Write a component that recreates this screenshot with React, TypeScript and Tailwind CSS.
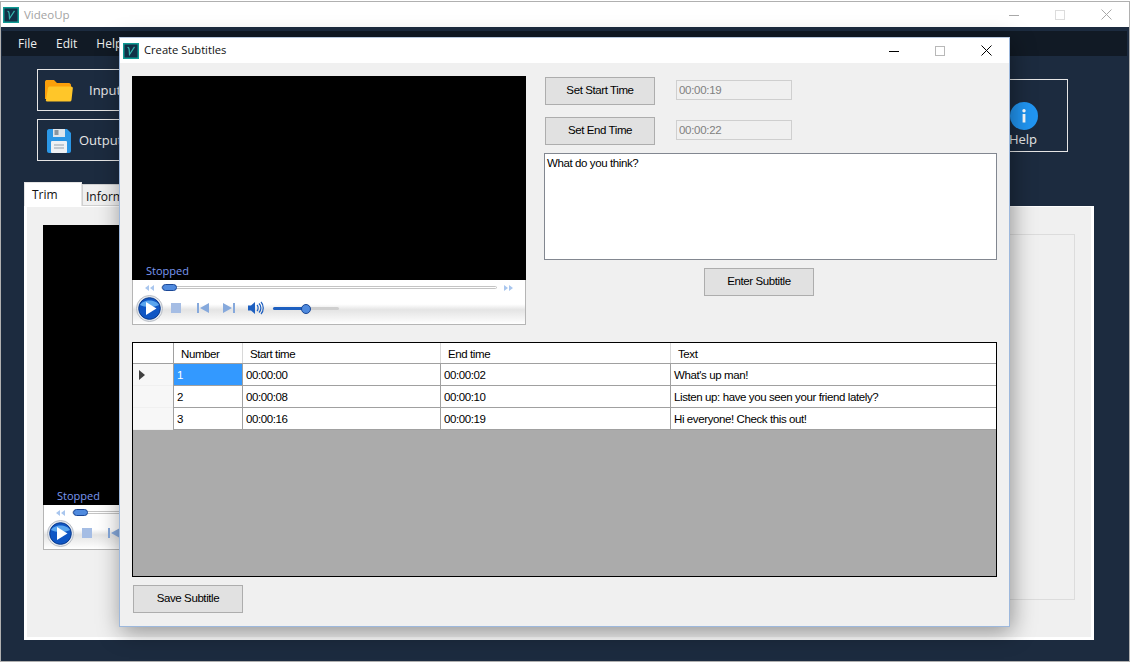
const ui = { fontFamily: '"Liberation Sans", Arial, sans-serif' };
const segoe = { fontFamily: '"Open Sans", "Noto Sans", sans-serif' };

const Logo = () => (
  <svg width="16" height="16" viewBox="0 0 16 16" className="shrink-0">
    <rect width="16" height="16" fill="#0f9a94" />
    <rect x="1.5" y="1.5" width="13" height="13" fill="#123047" />
    <path d="M4.5 4.5 C5.5 4 6 5 6.2 7 L6.5 11.5 L11.5 3.8" fill="none" stroke="#35b5ad" strokeWidth="1.2" />
  </svg>
);

const WinButtons = ({ dim }: { dim?: boolean }) => {
  const c = dim ? "#a8a8a8" : "#000000";
  return (
    <div className="flex items-center">
      <svg width="10" height="10" viewBox="0 0 10 10" className="mr-[36px]">
        <path d="M0 5.5H10" stroke={c} strokeWidth="1" />
      </svg>
      <svg width="10" height="10" viewBox="0 0 10 10" className="mr-[36px]">
        <rect x="0.5" y="0.5" width="9" height="9" fill="none" stroke={dim ? "#dcdcdc" : "#b8b8b8"} />
      </svg>
      <svg width="11" height="11" viewBox="0 0 11 11">
        <path d="M0.5 0.5L10.5 10.5M10.5 0.5L0.5 10.5" stroke={c} strokeWidth="1" />
      </svg>
    </div>
  );
};

const Player = ({ width, height }: { width: number; height: number }) => (
  <div className="flex flex-col shrink-0" style={{ width }}>
    <div className="bg-black flex items-end pl-[14px] pb-[2px]" style={{ height }}>
      <span className="text-[11px] leading-[14px] text-[#7a98f2]" style={segoe}>Stopped</span>
    </div>
    <div className="h-[45px] border border-t-0 border-[#b5b5b5] bg-[linear-gradient(#ffffff_0%,#ffffff_55%,#e4e4e4_68%,#f6f6f6_90%,#ffffff_100%)]">
      <div className="flex items-center h-[13px] mt-[1px] pl-[11px]">
        <svg width="10" height="6" viewBox="0 0 10 6"><path d="M5 0V6L1 3ZM10 0V6L6 3Z" fill="#a9c6ee" /></svg>
        <div className="relative ml-[7px] h-[3px] border border-[#c4c4c4] bg-white rounded-full" style={{ width: 336 }}>
          <div className="absolute left-0 top-[-3px] w-[15px] h-[7px] rounded-full bg-[#4f8ade] border border-[#1a4796]" />
        </div>
        <svg width="10" height="6" viewBox="0 0 10 6" className="ml-[7px]"><path d="M0 0V6L4 3ZM5 0V6L9 3Z" fill="#a9c6ee" /></svg>
      </div>
      <div className="flex items-center h-[28px] pl-[3px]">
        <svg width="27" height="27" viewBox="0 0 27 27">
          <circle cx="13.5" cy="13.5" r="13" fill="#e4e8ee" stroke="#b9bdc4" />
          <circle cx="13.5" cy="13.5" r="10.8" fill="#0f56c4" stroke="#0a3a8c" />
          <path d="M4 10 C7 4 20 4 23 10 C19 12.5 8 12.5 4 10Z" fill="#5aa6ee" />
          <path d="M10 7L20.5 13.5L10 20Z" fill="#ffffff" />
        </svg>
        <div className="ml-[8px] w-[10px] h-[10px] bg-[#a5bde4]" />
        <svg width="12" height="10" viewBox="0 0 12 10" className="ml-[16px]"><path d="M0 0H2V10H0ZM12 0V10L3 5Z" fill="#86a9dc" /></svg>
        <svg width="12" height="10" viewBox="0 0 12 10" className="ml-[14px]"><path d="M0 0V10L9 5ZM10 0H12V10H10Z" fill="#86a9dc" /></svg>
        <svg width="16" height="14" viewBox="0 0 16 14" className="ml-[13px]">
          <path d="M0 4.5H3L7 1V13L3 9.5H0Z" fill="#1d5fc0" />
          <path d="M9 4C10.5 5.5 10.5 8.5 9 10M11 2.5C13.5 5 13.5 9 11 11.5M13 1C16 4 16 10 13 13" fill="none" stroke="#1d5fc0" strokeWidth="1.2" />
        </svg>
        <div className="relative ml-[9px] w-[66px] h-[3px] bg-[#cfcfcf] rounded-full">
          <div className="w-[33px] h-[3px] bg-[#1d5fc0] rounded-full" />
          <div className="absolute left-[28px] top-[-3px] w-[10px] h-[10px] rounded-full bg-[#4f8ade] border border-[#1a4796]" />
        </div>
      </div>
    </div>
  </div>
);

const WinBtn = ({ label, className }: { label: string; className?: string }) => (
  <button className={"w-[110px] h-[28px] bg-[#e1e1e1] border border-[#adadad] text-[11.5px] text-black tracking-[-0.4px] " + (className ?? "")} style={ui}>
    {label}
  </button>
);

const rows = [
  ["1", "00:00:00", "00:00:02", "What's up man!"],
  ["2", "00:00:08", "00:00:10", "Listen up: have you seen your friend lately?"],
  ["3", "00:00:16", "00:00:19", "Hi everyone! Check this out!"],
];

const columns = "grid grid-cols-[40px_69px_198px_230px_1fr]";

const SubtitleGrid = () => (
  <div className="mt-[17px] h-[235px] border border-black bg-[#ababab] text-[11.5px] tracking-[-0.4px] text-black" style={ui}>
    <div className={columns + " h-[21px] bg-white border-b border-[#a0a0a0]"}>
      <div />
      <div className="border-l border-[#a0a0a0] pl-[7px] pt-[2px] leading-[18px]">Number</div>
      <div className="border-l border-[#d8d8d8] pl-[7px] pt-[2px] leading-[18px]">Start time</div>
      <div className="border-l border-[#d8d8d8] pl-[7px] pt-[2px] leading-[18px]">End time</div>
      <div className="border-l border-[#d8d8d8] pl-[7px] pt-[2px] leading-[18px]">Text</div>
    </div>
    {rows.map((row, i) => (
      <div key={row[0]} className={columns + " h-[22px] leading-[19px]"}>
        <div className="bg-[#f7f7f7] flex items-center pl-[6px] border-b border-[#f0f0f0]">
          {i === 0 && <div className="w-0 h-0 border-y-[5px] border-y-transparent border-l-[6px] border-l-[#404040]" />}
        </div>
        <div className={"border-l border-b border-[#a0a0a0] pl-[3px] pt-[2px] " + (i === 0 ? "bg-[#3399ff] text-white" : "bg-white")}>{row[0]}</div>
        <div className="bg-white border-l border-b border-[#a0a0a0] pl-[3px] pt-[2px]">{row[1]}</div>
        <div className="bg-white border-l border-b border-[#a0a0a0] pl-[3px] pt-[2px]">{row[2]}</div>
        <div className="bg-white border-l border-b border-[#a0a0a0] pl-[3px] pt-[2px]">{row[3]}</div>
      </div>
    ))}
  </div>
);

const CreateSubtitles = () => (
  <div className="absolute left-[119px] top-[37px] w-[891px] h-[590px] bg-[#f0f0f0] border border-[#9db8dc] border-t-[#b8c8de] shadow-[2px_5px_22px_rgba(0,0,0,0.4)]">
    <div className="h-[25px] bg-white flex items-center pl-[3px] pr-[17px]">
      <Logo />
      <span className="ml-[5px] text-[11.2px] text-[#111]" style={segoe}>Create Subtitles</span>
      <div className="ml-auto"><WinButtons /></div>
    </div>
    <div className="pl-[12px] pr-[12px]">
      <div className="flex pt-[13px]">
        <Player width={394} height={204} />
        <div className="ml-[18px] flex-1 flex flex-col">
          <div className="flex items-start pl-[1px] mt-[1px]">
            <WinBtn label="Set Start Time" />
            <input readOnly value="00:00:19" className="ml-[21px] mt-[3px] w-[116px] h-[20px] bg-[#f0f0f0] border border-[#cfcfcf] px-[2px] text-[11.5px] tracking-[-0.3px] text-[#808080]" style={ui} />
          </div>
          <div className="flex items-start pl-[1px] mt-[12px]">
            <WinBtn label="Set End Time" />
            <input readOnly value="00:00:22" className="ml-[21px] mt-[3px] w-[116px] h-[20px] bg-[#f0f0f0] border border-[#cfcfcf] px-[2px] text-[11.5px] tracking-[-0.3px] text-[#808080]" style={ui} />
          </div>
          <textarea readOnly value="What do you think?" className="mt-[8px] w-[453px] h-[107px] bg-white border border-[#828790] px-[2px] py-[1px] text-[11.5px] tracking-[-0.4px] text-black resize-none outline-none" style={ui} />
          <div className="flex mt-[8px] pl-[160px]">
            <WinBtn label="Enter Subtitle" />
          </div>
        </div>
      </div>
      <SubtitleGrid />
      <WinBtn label="Save Subtitle" className="mt-[8px] ml-[1px]" />
    </div>
  </div>
);

const ToolButton = ({ label, icon, labelClass }: { label: string; icon: React.ReactNode; labelClass: string }) => (
  <div className="w-[300px] h-[42px] pt-[2px] border border-[#e6e6e6] flex items-center text-[13px] text-[#e8e8e8]" style={segoe}>
    {icon}
    <span className={labelClass}>{label}</span>
  </div>
);

export default function App() {
  return (
    <div className="relative w-[1132px] h-[664px] overflow-hidden bg-white">
      <div className="w-[1130px] h-[661px] mt-px border border-[#b0b0b0] bg-[#1c2b3f] flex flex-col">
        <div className="h-[25px] bg-white flex items-center pl-[2px] pr-[17px] shrink-0">
          <Logo />
          <span className="ml-[5px] text-[11.5px] text-[#a3a3a3]" style={segoe}>VideoUp</span>
          <div className="ml-auto"><WinButtons dim /></div>
        </div>
        <div className="mt-[4px] ml-px mr-[2px] h-[25px] bg-[#111a25] flex items-center pl-[16px] gap-[19px] text-[12px] text-[#eeeeee] shrink-0" style={segoe}>
          <span>File</span>
          <span>Edit</span>
          <span>Help</span>
        </div>
        <div className="flex justify-between shrink-0 pl-[36px] pr-[61px] mt-[13px]">
          <div className="flex flex-col gap-[8px]">
            <ToolButton
              label="Input"
              labelClass="ml-[15px]"
              icon={
                <svg width="30" height="24" viewBox="0 0 30 24" className="ml-[6px]">
                  <path d="M1 3C1 1.5 2 1 3 1H10L13 4H25C26 4 27 5 27 6V20H1Z" fill="#fb9f0a" />
                  <path d="M4 9C4.3 8 5 7.5 6 7.5H27C28.5 7.5 29 8.5 28.8 9.5L27.5 21C27.3 22.2 26.5 22.5 25.5 22.5H3L1.8 22Z" fill="#ffc629" />
                </svg>
              }
            />
            <ToolButton
              label="Output"
              labelClass="ml-[8px]"
              icon={
                <svg width="24" height="24" viewBox="0 0 24 24" className="ml-[9px]">
                  <path d="M2 0H20L24 4V22C24 23 23 24 22 24H2C1 24 0 23 0 22V2C0 1 1 0 2 0Z" fill="#2b97e6" />
                  <rect x="6" y="0" width="12" height="8" fill="#dfe6ec" />
                  <rect x="7.5" y="1" width="4" height="5" fill="#8a96a0" />
                  <rect x="4" y="12" width="16" height="12" rx="1" fill="#eef1f4" />
                  <path d="M7 16H17M7 19H17" stroke="#b4bcc4" strokeWidth="1.4" />
                </svg>
              }
            />
          </div>
          <div className="mt-[10px] w-[100px] h-[73px] border border-[#e6e6e6] flex flex-col items-end pr-[30px] pt-[22px]">
            <svg width="28" height="28" viewBox="0 0 28 28" className="mr-[-1px]">
              <circle cx="14" cy="14" r="14" fill="#2196f3" />
              <rect x="12.6" y="12" width="2.8" height="8.5" fill="#ffffff" />
              <circle cx="14" cy="8.8" r="1.7" fill="#ffffff" />
            </svg>
            <span className="text-[13px] leading-[18px] text-[#e8e8e8]" style={segoe}>Help</span>
          </div>
        </div>
        <div className="pl-[23px] mt-[21px] flex flex-col">
          <div className="flex items-end h-[24px]">
            <div className="w-[58px] h-[24px] bg-white border border-b-0 border-[#e4e4e4] pl-[7px] pt-[3px] text-[12px] text-[#111]" style={segoe}>Trim</div>
            <div className="w-[100px] h-[22px] bg-[#f0f0f0] border border-[#d0d0d0] pl-[3px] pt-[3px] text-[12px] text-[#111]" style={segoe}>Information</div>
          </div>
          <div className="w-[1070px] h-[434px] bg-[#f0f0f0] border-x-[3px] border-b-[3px] border-t-[1px] border-white pl-[16px] pr-[16px] pt-[18px] flex justify-between items-start">
            <Player width={394} height={280} />
            <div className="mt-[9px] w-[500px] h-[366px] border border-[#dcdcdc]" />
          </div>
        </div>
      </div>
      <CreateSubtitles />
    </div>
  );
}
